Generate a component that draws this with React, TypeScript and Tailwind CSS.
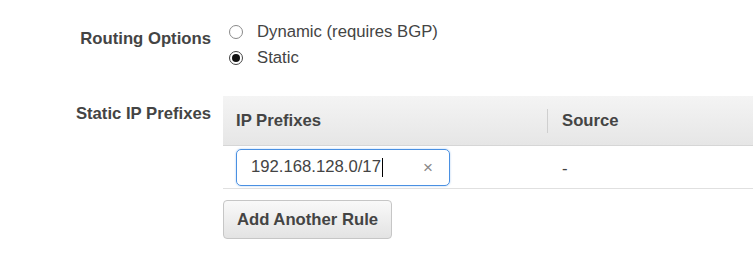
export default function App() {
  return (
    <div className="w-[753px] h-[262px] bg-white pt-[19px] font-['Liberation_Sans',Arial,sans-serif] text-[16.7px] text-[#444] overflow-hidden">
      {/* routing options */}
      <div className="flex">
        <div className="w-[211px] shrink-0 text-right font-bold leading-[20px] pt-[10px]">
          Routing Options
        </div>
        <div className="ml-[18px] flex flex-col">
          <label className="flex items-center h-[26px]">
            <span className="w-[14px] h-[14px] rounded-full border border-[#8a8a8a] bg-white" />
            <span className="ml-[14px] leading-[20px]">Dynamic (requires BGP)</span>
          </label>
          <label className="flex items-center h-[26px]">
            <span className="w-[14px] h-[14px] rounded-full border border-[#444] bg-white flex items-center justify-center">
              <span className="w-[8px] h-[8px] rounded-full bg-[#111]" />
            </span>
            <span className="ml-[14px] leading-[20px]">Static</span>
          </label>
        </div>
      </div>

      {/* static ip prefixes */}
      <div className="flex mt-[25px]">
        <div className="w-[211px] shrink-0 text-right font-bold leading-[20px] pt-[8px]">
          Static IP Prefixes
        </div>
        <div className="ml-[12px] flex-1">
          <div className="flex h-[50px] items-center bg-gradient-to-b from-[#f4f4f4] to-[#e6e6e6] border-b border-[#d6d6d6] font-bold">
            <div className="w-[324px] pl-[13px] leading-[20px]">IP Prefixes</div>
            <div className="w-px h-[24px] bg-[#cfcfcf]" />
            <div className="pl-[14px] leading-[20px]">Source</div>
          </div>
          <div className="flex h-[43px] items-center border-b border-[#e0e0e0]">
            <div className="w-[325px] pl-[13px]">
              <div className="w-[214px] h-[37px] rounded-[5px] border border-[#4a90e2] shadow-[0_0_2px_rgba(74,144,226,0.5)] flex items-center pl-[14px] pr-[16px]">
                <span className="leading-[20px]">192.168.128.0/17</span>
                <span className="w-px h-[19px] bg-black ml-px" />
                <span className="ml-auto text-[17px] text-[#888] leading-none">×</span>
              </div>
            </div>
            <div className="pl-[14px] leading-[20px] pt-[3px]">-</div>
          </div>
          <button className="mt-[11px] w-[169px] h-[39px] rounded-[4px] border border-[#c6c6c6] bg-gradient-to-b from-[#f9f9f9] to-[#e3e3e3] font-bold text-[#444] leading-[20px]">
            Add Another Rule
          </button>
        </div>
      </div>
    </div>
  );
}
